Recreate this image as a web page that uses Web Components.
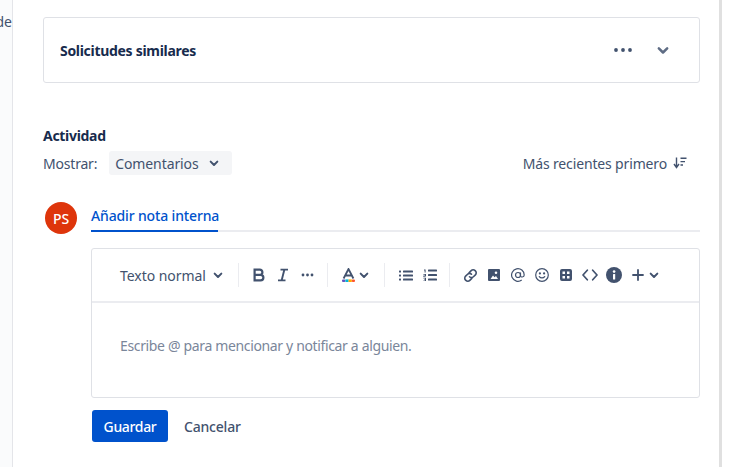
<!DOCTYPE html>
<html lang="es">
<head>
<meta charset="utf-8">
<title>Actividad</title>
<style>
  html, body { margin: 0; height: 467px; overflow: hidden; background: #fff; }
  body { font-family: "Noto Sans", "Open Sans", sans-serif; font-size: 14px; color: #172b4d; }
</style>
</head>
<body>
<x-shell>
  <x-similar-card slot="main">Solicitudes similares</x-similar-card>
  <x-activity-head slot="main"></x-activity-head>
  <x-comment-box slot="main"></x-comment-box>
</x-shell>

<script>
const chevron = (size, color) => `<svg width="${size}" height="${size}" viewBox="0 0 24 24" fill="none" stroke="${color}" stroke-width="3" stroke-linecap="round" stroke-linejoin="round"><path d="M7 10l5 5 5-5"/></svg>`;

class Shell extends HTMLElement {
  constructor() {
    super();
    this.attachShadow({mode: 'open'});
  }

  connectedCallback() {
    this.shadowRoot.innerHTML = `
    <style>
      :host { display: flex; width: 732px; height: 467px; overflow: hidden; }
      .rail {
        flex: 0 0 12px;
        background: #fafbfc;
        border-right: 1px solid #e4e5e9;
        overflow: hidden;
        direction: rtl;
        padding-top: 12px;
        color: #42526e;
        line-height: 20px;
      }
      main {
        flex: 0 0 657px;
        padding: 17px 19px 0 30px;
      }
      .bar { flex: 0 0 3px; background: #e0e0e0; }
    </style>
    <div class="rail">de</div>
    <main><slot name="main"></slot></main>
    <div class="bar"></div>
    `;
  }
}

class SimilarCard extends HTMLElement {
  constructor() {
    super();
    this.attachShadow({mode: 'open'});
  }

  connectedCallback() {
    this.shadowRoot.innerHTML = `
    <style>
      :host {
        display: flex;
        align-items: center;
        box-sizing: border-box;
        height: 66px;
        padding: 0 26px 0 16px;
        border: 1px solid #dfe1e6;
        border-radius: 3px;
      }
      .title { flex: 1; font-weight: 700; font-size: 14px; letter-spacing: -.3px; color: #172b4d; }
      .dots { display: flex; margin-right: 21px; }
      .dots svg, .chev svg { display: block; }
      .chev { display: flex; }
    </style>
    <div class="title"><slot></slot></div>
    <div class="dots"><svg width="18" height="6" viewBox="0 0 18 6" fill="#42526e"><circle cx="2" cy="3" r="1.9"/><circle cx="9" cy="3" r="1.9"/><circle cx="16" cy="3" r="1.9"/></svg></div>
    <div class="chev">${chevron(20, '#5e6c84')}</div>
    `;
  }
}

class ActivityHead extends HTMLElement {
  constructor() {
    super();
    this.attachShadow({mode: 'open'});
  }

  connectedCallback() {
    this.shadowRoot.innerHTML = `
    <style>
      :host { display: block; margin-top: 43px; color: #42526e; }
      h2 { margin: 0 0 5px; font-size: 14px; line-height: 20px; font-weight: 700; letter-spacing: -.3px; color: #172b4d; }
      .row { display: flex; align-items: center; height: 24px; }
      .label { margin-right: 12px; letter-spacing: -.2px; }
      .select {
        display: flex; align-items: center;
        box-sizing: border-box; height: 24px; width: 123px;
        padding-left: 6px;
        background: #f4f5f7; border-radius: 3px;
        letter-spacing: -.1px;
      }
      .select svg { margin-left: 7px; }
      .sort { margin-left: auto; margin-right: 13px; display: flex; align-items: center; gap: 6px; letter-spacing: -.15px; }
      svg { display: block; }
    </style>
    <h2>Actividad</h2>
    <div class="row">
      <span class="label">Mostrar:</span>
      <div class="select">Comentarios ${chevron(16, '#42526e')}</div>
      <div class="sort">Más recientes primero
        <svg width="14" height="14" viewBox="0 0 14 14" fill="none" stroke="#42526e" stroke-width="1.4"><path d="M3.5 1.500v9M1 8l2.500 3.500L6 8"/><path d="M7.500 2.200h6M7.500 5.600h4.500M7.500 9h2.500"/></svg>
      </div>
    </div>
    `;
  }
}

class Toolbar extends HTMLElement {
  constructor() {
    super();
    this.attachShadow({mode: 'open'});
  }

  connectedCallback() {
    this.shadowRoot.innerHTML = `
    <style>
      :host {
        display: flex; align-items: center;
        height: 54px; box-sizing: border-box;
        padding-left: 28px;
        border-bottom: 2px solid #ebecf0;
        color: #42526e;
      }
      .style { display: flex; align-items: center; letter-spacing: -.05px; width: 118px; }
      .style svg { margin-left: 4px; }
      .sep { width: 1px; height: 24px; background: #ebecf0; flex: none; }
      svg { display: block; flex: none; }
    </style>
    <div class="style">Texto normal ${chevron(16, '#42526e')}</div>
    <div class="sep" style="margin-right:13px"></div>
    <svg width="14" height="14" viewBox="0 0 14 14" fill="none" stroke="#42526e" stroke-width="2.2"><path d="M2.600 1.600h5.200a2.600 2.600 0 0 1 0 5.200H2.600zM2.600 6.800h6a2.800 2.800 0 0 1 0 5.600h-6z"/></svg>
    <svg style="margin-left:11px" width="12" height="14" viewBox="0 0 12 14" fill="none" stroke="#42526e" stroke-width="1.900"><path d="M3.500 1.600h7.500M1 12.400h7.500M7.400 1.600L4.600 12.400"/></svg>
    <svg style="margin-left:12px" width="13" height="4" viewBox="0 0 13 4" fill="#42526e"><circle cx="2" cy="2" r="1.400"/><circle cx="6.500" cy="2" r="1.400"/><circle cx="11" cy="2" r="1.400"/></svg>
    <div class="sep" style="margin-left:13px;margin-right:14px"></div>
    <svg width="13" height="14" viewBox="0 0 13 14" fill="none"><path d="M1.600 10.500L6.500 1 11.400 10.500M3.200 7.500h6.600" stroke="#42526e" stroke-width="1.800"/><rect y="11.400" width="3.400" height="2.600" rx="1" fill="#6554c0"/><rect x="3.400" y="11.400" width="3.200" height="2.600" fill="#00b8d9"/><rect x="6.600" y="11.400" width="3.200" height="2.600" fill="#ffab00"/><rect x="9.800" y="11.400" width="3.200" height="2.600" rx="1" fill="#ff5630"/></svg>
    <span style="margin-left:1px">${chevron(16, '#42526e')}</span>
    <div class="sep" style="margin-left:12px;margin-right:14px"></div>
    <svg width="14" height="11" viewBox="0 0 14 11" fill="#42526e"><rect width="2" height="2" y=".5" rx=".5"/><rect width="2" height="2" y="4.500" rx=".5"/><rect width="2" height="2" y="8.500" rx=".5"/><rect x="4" y=".5" width="10" height="2" rx=".6"/><rect x="4" y="4.500" width="10" height="2" rx=".6"/><rect x="4" y="8.500" width="10" height="2" rx=".6"/></svg>
    <svg style="margin-left:10px" width="14" height="12" viewBox="0 0 14 12" fill="#42526e"><rect x="5" y=".5" width="9" height="2" rx=".6"/><rect x="5" y="5" width="9" height="2" rx=".6"/><rect x="5" y="9.500" width="9" height="2" rx=".6"/><path d="M1 .6h1.600v3H1.600V1.600H1zM.4 5h2.600v2.200H1.400v.5H3v.6H.4V6.600H2V5.700H.4zM.4 9h2.600v3H.4v-.6H2v-.6H1v-.6h1v-.6H.4z"/></svg>
    <div class="sep" style="margin-left:12px;margin-right:13px"></div>
    <svg width="15" height="15" viewBox="0 0 15 15" fill="none" stroke="#42526e" stroke-width="1.600" stroke-linecap="round"><path d="M6.200 4.600l2-2a2.700 2.700 0 0 1 3.900 0l.3.300a2.700 2.700 0 0 1 0 3.900l-2 2a2.700 2.700 0 0 1-3.900 0"/><path d="M8.800 10.400l-2 2a2.700 2.700 0 0 1-3.900 0l-.3-.3a2.700 2.700 0 0 1 0-3.900l2-2a2.700 2.700 0 0 1 3.900 0"/></svg>
    <svg style="margin-left:10px" width="12" height="12" viewBox="0 0 12 12"><path fill="#42526e" fill-rule="evenodd" d="M1 0h10a1 1 0 0 1 1 1v10a1 1 0 0 1-1 1H1a1 1 0 0 1-1-1V1a1 1 0 0 1 1-1zm1.500 10L5 6.500 6.500 8.300 8 7l2 3zM8 2.500a1.300 1.300 0 1 0 0 2.600 1.300 1.300 0 0 0 0-2.600z"/></svg>
    <svg style="margin-left:11px" width="14" height="14" viewBox="0 0 14 14" fill="none" stroke="#42526e" stroke-width="1.200"><circle cx="7" cy="7" r="2.500"/><path d="M9.500 4.500v3.300c0 1.700 3.700 1.700 3.700-.8a6.300 6.300 0 1 0-2.500 5"/></svg>
    <svg style="margin-left:10px" width="14" height="14" viewBox="0 0 14 14" fill="none" stroke="#42526e" stroke-width="1.200" stroke-linecap="round"><circle cx="7" cy="7" r="6.300"/><path d="M4.300 8.600c1.300 1.700 4.100 1.700 5.400 0"/><circle cx="4.900" cy="5.400" r=".5" fill="#42526e"/><circle cx="9.100" cy="5.400" r=".5" fill="#42526e"/></svg>
    <svg style="margin-left:11px" width="12" height="12" viewBox="0 0 12 12"><path fill="#42526e" fill-rule="evenodd" d="M2 0h8a2 2 0 0 1 2 2v8a2 2 0 0 1-2 2H2a2 2 0 0 1-2-2V2a2 2 0 0 1 2-2zm.500 2.500v2.500H5V2.500zm4.500 0v2.500h2.500V2.500zM2.500 7v2.500H5V7zM7 7v2.500h2.500V7z"/></svg>
    <svg style="margin-left:10px" width="16" height="12" viewBox="0 0 16 12" fill="none" stroke="#42526e" stroke-width="1.700" stroke-linecap="round" stroke-linejoin="round"><path d="M5.300 1.200L1 6l4.300 4.800M10.700 1.200L15 6l-4.300 4.800"/></svg>
    <svg style="margin-left:8px" width="16" height="16" viewBox="0 0 16 16"><circle cx="8" cy="8" r="8" fill="#42526e"/><rect x="7" y="7" width="2.200" height="5.500" rx=".5" fill="#fff"/><circle cx="8.100" cy="4.600" r="1.300" fill="#fff"/></svg>
    <svg style="margin-left:10px" width="12" height="12" viewBox="0 0 12 12" fill="none" stroke="#42526e" stroke-width="1.800" stroke-linecap="round"><path d="M6 1v10M1 6h10"/></svg>
    <span style="margin-left:2px">${chevron(16, '#42526e')}</span>
    `;
  }
}

class CommentBox extends HTMLElement {
  constructor() {
    super();
    this.attachShadow({mode: 'open'});
  }

  connectedCallback() {
    this.shadowRoot.innerHTML = `
    <style>
      :host { display: flex; gap: 14px; margin-top: 25px; padding-left: 2px; }
      .avatar {
        flex: none; width: 32px; height: 32px; margin-top: 2px;
        border-radius: 50%; background: #de350b; color: #fff;
        display: flex; align-items: center; justify-content: center;
        font-size: 14px; font-weight: 500;
      }
      .col { flex: 1; min-width: 0; }
      .tabs { height: 30px; border-bottom: 2px solid #ebecf0; }
      .tab {
        display: inline-block; height: 30px;
        line-height: 32px; color: #0052cc; border-bottom: 2px solid #0052cc;
        font-weight: 500; letter-spacing: -.15px; width: 127px; white-space: nowrap;
      }
      .editor {
        margin-top: 16px; height: 150px; box-sizing: border-box;
        border: 1px solid #dfe1e6; border-radius: 3px;
      }
      .ph { padding: 33px 28px 0; color: #7a869a; font-size: 14px; line-height: 20px; letter-spacing: -.35px; }
      .actions { display: flex; align-items: center; margin-top: 12px; padding-left: 1px; }
      .primary {
        width: 76px; height: 32px; border-radius: 3px; background: #0052cc;
        color: #fff; display: flex; align-items: center; justify-content: center;
        font-weight: 500; letter-spacing: -.35px;
      }
      .cancel { margin-left: 16px; color: #42526e; font-weight: 500; letter-spacing: -.2px; }
    </style>
    <div class="avatar">PS</div>
    <div class="col">
      <div class="tabs"><span class="tab">Añadir nota interna</span></div>
      <div class="editor">
        <x-toolbar></x-toolbar>
        <div class="ph">Escribe @ para mencionar y notificar a alguien.</div>
      </div>
      <div class="actions">
        <div class="primary">Guardar</div>
        <div class="cancel">Cancelar</div>
      </div>
    </div>
    `;
  }
}

customElements.define('x-shell', Shell);
customElements.define('x-similar-card', SimilarCard);
customElements.define('x-activity-head', ActivityHead);
customElements.define('x-toolbar', Toolbar);
customElements.define('x-comment-box', CommentBox);
</script>
</body>
</html>
